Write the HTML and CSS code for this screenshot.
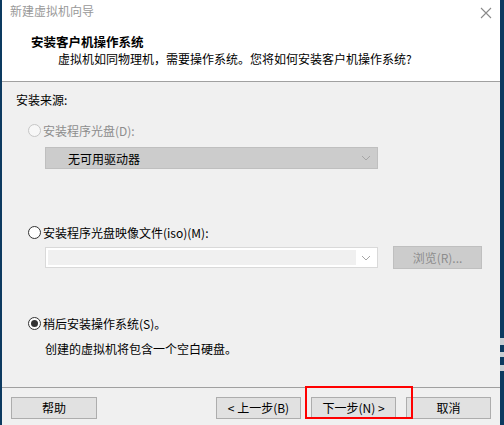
FILE: index.html
```html
<!DOCTYPE html>
<html lang="zh-CN">
<head>
<meta charset="utf-8">
<title>新建虚拟机向导</title>
<link rel="stylesheet" href="styles.css">
</head>
<body>
<div class="desktop">
  <div class="edge-left"></div>
  <div class="window">
    <div class="titlebar">
      <span class="title">新建虚拟机向导</span>
      <svg class="close" width="12" height="12" viewBox="0 0 12 12"><path d="M1 1 L11 11 M11 1 L1 11" stroke="#8a8a8a" stroke-width="1.1" fill="none"/></svg>
    </div>
    <div class="header">
      <div class="h-title">安装客户机操作系统</div>
      <div class="h-sub">虚拟机如同物理机，需要操作系统。您将如何安装客户机操作系统?</div>
    </div>
    <div class="content">
      <div class="label">安装来源:</div>
      <div class="radio-row row1 disabled"><span class="radio"></span><span>安装程序光盘(D):</span></div>
      <div class="select disabled-select">
        <span class="sel-text">无可用驱动器</span>
        <svg class="chev" width="10" height="6" viewBox="0 0 10 6"><path d="M1 1 L5 5 L9 1" stroke="#a6a6a6" fill="none"/></svg>
      </div>
      <div class="radio-row row2"><span class="radio"></span><span>安装程序光盘映像文件(iso)(M):</span></div>
      <div class="combo-row">
        <div class="combo">
          <div class="combo-field"></div>
          <div class="combo-btn"><svg width="10" height="6" viewBox="0 0 10 6"><path d="M1 1 L5 5 L9 1" stroke="#a6a6a6" fill="none"/></svg></div>
        </div>
        <div class="btn browse">浏览(R)...</div>
      </div>
      <div class="radio-row row3"><span class="radio checked"></span><span>稍后安装操作系统(S)。</span></div>
      <div class="note">创建的虚拟机将包含一个空白硬盘。</div>
    </div>
    <div class="footer">
      <div class="btn">帮助</div>
      <div class="spacer"></div>
      <div class="btn">&lt; 上一步(B)</div>
      <div class="btn">下一步(N) &gt;</div>
      <div class="btn">取消</div>
      <div class="highlight"></div>
    </div>
  </div>
  <div class="edge-right"></div>
</div>
</body>
</html>
```
FILE: styles.css
```css
* { box-sizing: border-box; }
html, body { margin: 0; padding: 0; }
body {
  width: 504px;
  height: 425px;
  overflow: hidden;
  font-family: "Noto Sans CJK SC", "Noto Sans", sans-serif;
  font-size: 12px;
  color: #000;
}
.desktop {
  display: flex;
  width: 504px;
  height: 425px;
}
.edge-left {
  width: 2px;
  background: #0c3a60;
}
.edge-right {
  width: 4px;
  background:
    linear-gradient(to bottom,
      #0c3a60 0, #0c3a60 338px,
      #c8cdd2 338px, #c8cdd2 345px,
      #0c3a60 345px, #0c3a60 352px,
      #c8cdd2 352px, #c8cdd2 357px,
      #0c3a60 357px, #0c3a60 365px,
      #c8cdd2 365px, #c8cdd2 371px,
      #0c3a60 371px);
}
.window {
  width: 498px;
  display: flex;
  flex-direction: column;
  background: #f0f0f0;
}
.titlebar {
  height: 29px;
  background: #fff;
  display: flex;
  align-items: flex-start;
  justify-content: space-between;
  padding: 2px 8px 0 8px;
}
.title {
  color: #999;
  line-height: 18px;
}
.close { margin-top: 5px; }
.header {
  height: 53px;
  background: #fff;
  border-bottom: 1px solid #a0a0a0;
  padding: 5px 0 0 29px;
}
.h-title {
  font-weight: bold;
  font-size: 12.5px;
  line-height: 16px;
}
.h-sub {
  line-height: 17px;
  padding-left: 27px;
}
.content {
  flex: 1;
  display: flex;
  flex-direction: column;
  padding-left: 14px;
}
.label {
  line-height: 20px;
  margin-top: 8px;
}
.radio-row {
  display: flex;
  align-items: center;
  height: 16px;
  margin-left: 12px;
  gap: 2px;
}
.row1 { margin-top: 12px; }
.row2 { margin-top: 55px; }
.row3 { margin-top: 46px; }
.disabled { color: #8d8d8d; }
.radio {
  width: 13px;
  height: 13px;
  border-radius: 50%;
  border: 1px solid #333;
  background: #fff;
  display: inline-flex;
  align-items: center;
  justify-content: center;
}
.disabled .radio {
  border-color: #c6c6c6;
  background: #f7f7f7;
}
.radio.checked::after {
  content: "";
  width: 7px;
  height: 7px;
  border-radius: 50%;
  background: #333;
}
.select {
  margin-top: 9px;
  margin-left: 29px;
  width: 333px;
  height: 22px;
  display: flex;
  align-items: center;
  justify-content: space-between;
  padding: 0 6px 0 22px;
}
.disabled-select {
  background: #cccccc;
  border: 1px solid #bfbfbf;
}
.combo-row {
  margin-top: 6px;
  margin-left: 29px;
  display: flex;
  align-items: center;
  height: 23px;
  gap: 15px;
}
.combo {
  width: 333px;
  height: 21px;
  border: 1px solid #d9d9d9;
  background: #fff;
  display: flex;
  padding: 2px;
}
.combo-field {
  flex: 1;
  background: #f0f0f0;
}
.combo-btn {
  width: 19px;
  display: flex;
  align-items: center;
  justify-content: center;
  background: #fff;
}
.note {
  margin-top: 10px;
  margin-left: 29px;
  line-height: 16px;
}
.btn {
  width: 85px;
  height: 22px;
  background: #e1e1e1;
  border: 1px solid #adadad;
  display: flex;
  align-items: center;
  justify-content: center;
  line-height: 16px;
}
.browse {
  width: 89px;
  height: 23px;
  background: #cccccc;
  border-color: #bfbfbf;
  color: #8d8d8d;
}
.footer {
  position: relative;
  height: 38px;
  border-top: 1px solid #a0a0a0;
  display: flex;
  align-items: flex-start;
  padding: 9px 9px 0 9px;
  gap: 10px;
}
.footer .btn:first-child { width: 86px; }
.spacer { flex: 1; }
.highlight {
  position: absolute;
  left: 303px;
  top: -2px;
  width: 108px;
  height: 33px;
  border: 2px solid #ff0000;
  pointer-events: none;
}
```
